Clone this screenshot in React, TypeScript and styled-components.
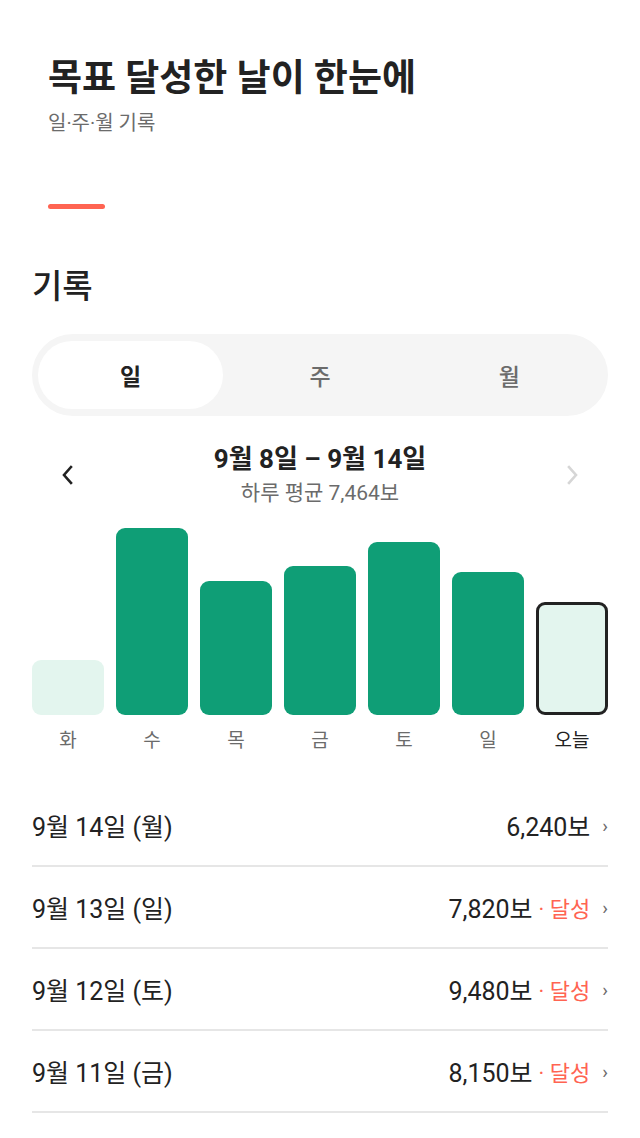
import React from "react";
import styled, { createGlobalStyle } from "styled-components";

const GlobalStyle = createGlobalStyle`
  html, body { margin: 0; padding: 0; background: #ffffff; }
  body {
    font-family: Roboto, "Noto Sans CJK KR", sans-serif;
    color: #222222;
    -webkit-font-smoothing: antialiased;
  }
  * { box-sizing: border-box; }
`;

const Page = styled.div`
  width: 640px;
  min-height: 1138px;
  padding: 0 32px 40px;
  display: flex;
  flex-direction: column;
`;

const Header = styled.header`
  padding: 54px 16px 0;
  display: flex;
  flex-direction: column;
`;

const Title = styled.h1`
  margin: 0;
  font-size: 37px;
  line-height: 50px;
  font-weight: 700;
  color: #222222;
`;

const Subtitle = styled.p`
  margin: 5px 0 0;
  font-size: 20px;
  line-height: 28px;
  color: #6b6b6b;
`;

const Accent = styled.div`
  margin-top: 67px;
  width: 57px;
  height: 5px;
  border-radius: 3px;
  background: #ff6452;
`;

const SectionTitle = styled.h2`
  margin: 56px 0 0;
  font-size: 33px;
  line-height: 44px;
  font-weight: 500;
  color: #222222;
`;

const Segmented = styled.div`
  margin-top: 25px;
  height: 82px;
  padding: 7px 6px;
  border-radius: 41px;
  background: #f5f5f5;
  display: grid;
  grid-template-columns: repeat(3, 1fr);
  gap: 4px;
`;

const Tab = styled.button<{ $active?: boolean }>`
  border: none;
  margin: 0;
  padding: 0;
  font-family: inherit;
  font-size: 23px;
  font-weight: ${(p) => (p.$active ? 700 : 500)};
  color: ${(p) => (p.$active ? "#222222" : "#6b6b6b")};
  background: ${(p) => (p.$active ? "#ffffff" : "transparent")};
  border-radius: 34px;
  display: flex;
  align-items: center;
  justify-content: center;
`;

const Nav = styled.div`
  margin-top: 25px;
  display: grid;
  grid-template-columns: 72px 1fr 72px;
  align-items: center;
`;

const NavButton = styled.div<{ $disabled?: boolean }>`
  display: flex;
  align-items: center;
  justify-content: center;
  color: ${(p) => (p.$disabled ? "#d6d6d6" : "#222222")};
`;

const NavCenter = styled.div`
  display: flex;
  flex-direction: column;
  align-items: center;
`;

const RangeTitle = styled.div`
  font-size: 26px;
  line-height: 36px;
  font-weight: 700;
  color: #222222;
`;

const RangeSub = styled.div`
  font-size: 21px;
  line-height: 32px;
  color: #6b6b6b;
`;

const Chart = styled.div`
  margin-top: 14px;
  display: grid;
  grid-template-columns: repeat(7, 1fr);
  column-gap: 12px;
`;

const BarCol = styled.div`
  display: flex;
  flex-direction: column;
  align-items: stretch;
`;

const BarTrack = styled.div`
  height: 192px;
  display: flex;
  flex-direction: column;
  justify-content: flex-end;
`;

const Bar = styled.div<{ $kind: "low" | "done" | "today" }>`
  border-radius: 9px;
  background: ${(p) => (p.$kind === "done" ? "#0f9e76" : "#e3f5ee")};
  border: ${(p) => (p.$kind === "today" ? "3px solid #222222" : "none")};
`;

const DayLabel = styled.div<{ $today?: boolean }>`
  margin-top: 12px;
  text-align: center;
  font-size: 19px;
  line-height: 28px;
  color: ${(p) => (p.$today ? "#222222" : "#6b6b6b")};
`;

const List = styled.ul`
  list-style: none;
  margin: 30px 0 0;
  padding: 0;
`;

const Row = styled.li`
  height: 82px;
  display: flex;
  align-items: center;
  justify-content: space-between;
  border-bottom: 2px solid #e6e6e6;
`;

const RowDate = styled.span`
  font-size: 25px;
  color: #222222;
`;

const RowRight = styled.span`
  display: flex;
  align-items: center;
`;

const Steps = styled.span`
  font-size: 25px;
  color: #222222;
`;

const Achieved = styled.span`
  margin-left: 6px;
  font-size: 22px;
  color: #ff6452;
`;

const Chevron = styled.span`
  margin-left: 12px;
  font-size: 19px;
  color: #6b6b6b;
`;

const ChevronIcon = ({ dir }: { dir: "left" | "right" }) => (
  <svg width="20" height="22" viewBox="0 0 20 22" fill="none">
    <path
      d={dir === "left" ? "M13 3 L6 11 L13 19" : "M7 3 L14 11 L7 19"}
      stroke="currentColor"
      strokeWidth="2.6"
      strokeLinecap="square"
      strokeLinejoin="miter"
    />
  </svg>
);

type Day = { label: string; height: number; kind: "low" | "done" | "today" };

const days: Day[] = [
  { label: "화", height: 55, kind: "low" },
  { label: "수", height: 187, kind: "done" },
  { label: "목", height: 134, kind: "done" },
  { label: "금", height: 149, kind: "done" },
  { label: "토", height: 173, kind: "done" },
  { label: "일", height: 143, kind: "done" },
  { label: "오늘", height: 113, kind: "today" },
];

const records = [
  { date: "9월 14일 (월)", steps: "6,240보", done: false },
  { date: "9월 13일 (일)", steps: "7,820보", done: true },
  { date: "9월 12일 (토)", steps: "9,480보", done: true },
  { date: "9월 11일 (금)", steps: "8,150보", done: true },
];

export default function App() {
  return (
    <>
      <GlobalStyle />
      <Page>
        <Header>
          <Title>목표 달성한 날이 한눈에</Title>
          <Subtitle>일·주·월 기록</Subtitle>
          <Accent />
        </Header>

        <SectionTitle>기록</SectionTitle>

        <Segmented>
          <Tab $active>일</Tab>
          <Tab>주</Tab>
          <Tab>월</Tab>
        </Segmented>

        <Nav>
          <NavButton>
            <ChevronIcon dir="left" />
          </NavButton>
          <NavCenter>
            <RangeTitle>9월 8일 – 9월 14일</RangeTitle>
            <RangeSub>하루 평균 7,464보</RangeSub>
          </NavCenter>
          <NavButton $disabled>
            <ChevronIcon dir="right" />
          </NavButton>
        </Nav>

        <Chart>
          {days.map((d) => (
            <BarCol key={d.label}>
              <BarTrack>
                <Bar $kind={d.kind} style={{ height: d.height }} />
              </BarTrack>
              <DayLabel $today={d.kind === "today"}>{d.label}</DayLabel>
            </BarCol>
          ))}
        </Chart>

        <List>
          {records.map((r) => (
            <Row key={r.date}>
              <RowDate>{r.date}</RowDate>
              <RowRight>
                <Steps>{r.steps}</Steps>
                {r.done && <Achieved>· 달성</Achieved>}
                <Chevron>›</Chevron>
              </RowRight>
            </Row>
          ))}
        </List>
      </Page>
    </>
  );
}
